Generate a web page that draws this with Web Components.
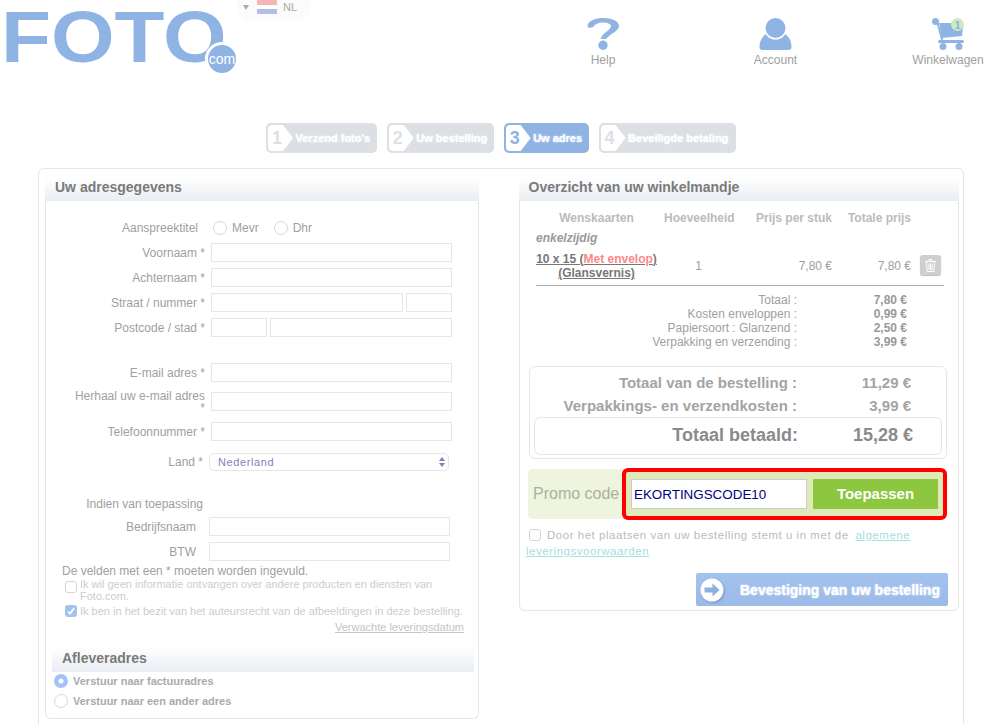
<!DOCTYPE html>
<html lang="nl">
<head>
<meta charset="utf-8">
<title>Foto.com</title>
<style>
  html, body { margin: 0; height: 724px; overflow: hidden; background: #fff; }
  body { font: 12px "Liberation Sans", Arial, sans-serif; color: #a0a0a0; }
</style>
</head>
<body>
<site-header></site-header>
<step-bar>
  <step-item n="1">Verzend foto's</step-item>
  <step-item n="2">Uw bestelling</step-item>
  <step-item n="3" active>Uw adres</step-item>
  <step-item n="4" style="padding-right:7.500px">Beveiligde betaling</step-item>
</step-bar>
<checkout-frame>
  <titled-panel heading="Uw adresgegevens" style="width:434px">
    <address-form></address-form>
  </titled-panel>
  <titled-panel heading="Overzicht van uw winkelmandje" style="width:440px;--pad:9.500px">
    <basket-summary></basket-summary>
    <order-totals></order-totals>
    <promo-bar></promo-bar>
    <order-confirm></order-confirm>
  </titled-panel>
</checkout-frame>

<script>
class SiteHeader extends HTMLElement {
  connectedCallback() {
    this.attachShadow({ mode: 'open' });
    this.shadowRoot.innerHTML = `
      <style>
        :host { display: flex; height: 123px; align-items: flex-start; }
        .logo { position: relative; width: 237px; height: 80px; flex: none; }
        .foto {
          display: inline-block;
          font: bold 73px/73px "Liberation Sans", Arial, sans-serif;
          color: #8fb4e3;
          margin: 0 0 0 1px;
          transform: scaleX(1.12);
          transform-origin: left;
        }
        .com {
          position: absolute; left: 205px; top: 42px;
          width: 28px; height: 28px; border: 3px solid #fff; border-radius: 50%;
          background: #8fb4e3; color: #fff;
          font-size: 14px; line-height: 29px; text-align: center;
        }
        .lang {
          width: 73px; height: 20px; flex: none; box-sizing: border-box;
          background: #fafbfa; border-radius: 0 0 12px 12px;
          display: flex; padding-left: 6px; color: #aaa; font-size: 11px; line-height: 14px;
        }
        .arrow { width: 0; height: 0; margin-top: 5px; border: 3.500px solid transparent; border-top: 5px solid #aaa; border-bottom: 0; }
        .flag { width: 20px; height: 14px; margin: 0 6px 0 8px; background: linear-gradient(#f6b6b6 0 5px, #fff 5px 9px, #b0bfe2 9px); }
        nav { margin: 0 -1px 0 auto; width: 425px; display: flex; justify-content: space-between; padding-top: 18px; }
      </style>
      <div class="logo"><span class="foto">FOTO</span><span class="com">com</span></div>
      <div class="lang"><span class="arrow"></span><span class="flag"></span>NL</div>
      <nav>
        <nav-link label="Help">
          <svg width="33" height="33" viewBox="0 0 33 33" fill="#8fb4e3">
            <path d="M.5 7C2 2.500 9 0 16 0c9 0 16 3 16 8 0 5-8 7-13 13h-5.500c1.500-6 10.500-9 10.500-12.500 0-3-4-4-8.500-4-4.500 0-7 1.500-9.500 4.500C3.500 10.500 0 10 .5 7z"/>
            <circle cx="16" cy="27.300" r="4.700"/>
          </svg>
        </nav-link>
        <nav-link label="Account">
          <svg width="33" height="33" viewBox="0 0 33 33">
            <path fill="#8fb4e3" d="M.5 29c0-8 5-13 10-15h12c5 2 10 7 10 15q0 3-3 3h-16H3.500q-3 0-3-3z"/>
            <circle cx="16.500" cy="10" r="11.500" fill="#fff"/>
            <circle cx="16.500" cy="10" r="10" fill="#8fb4e3"/>
          </svg>
        </nav-link>
        <nav-link label="Winkelwagen">
          <svg width="33" height="33" viewBox="0 0 33 33">
            <circle cx="3.500" cy="3.500" r="3.500" fill="#8fb4e3"/>
            <path d="M3.500 3.500l1.800.8 5.200 19" fill="none" stroke="#8fb4e3" stroke-width="2"/>
            <path fill="#8fb4e3" d="M7 5h24.500l-1.500 13-20 2z"/>
            <rect x="6" y="22" width="26" height="3" rx="1.500" fill="#8fb4e3"/>
            <circle cx="11" cy="28.500" r="3.500" fill="#8fb4e3"/>
            <circle cx="27" cy="28.500" r="3.500" fill="#8fb4e3"/>
            <circle cx="25.500" cy="6.500" r="6.500" fill="#cfe8c6"/>
            <text x="25.500" y="10.500" text-anchor="middle" font-family="Liberation Sans" font-weight="bold" font-size="11" fill="#8fb4d8">1</text>
          </svg>
        </nav-link>
      </nav>`;
  }
}

class NavLink extends HTMLElement {
  connectedCallback() {
    this.attachShadow({ mode: 'open' });
    this.shadowRoot.innerHTML = `
      <style>
        :host { display: flex; flex-direction: column; align-items: center; width: 80px; }
        ::slotted(svg) { display: block; }
        span { color: #a0a0a0; font-size: 12px; line-height: 16px; margin-top: 1px; }
      </style>
      <slot></slot><span>${this.getAttribute('label')}</span>`;
  }
}

class StepBar extends HTMLElement {
  connectedCallback() {
    this.attachShadow({ mode: 'open' });
    this.shadowRoot.innerHTML = `
      <style>:host { display: flex; gap: 10px; padding-left: 266px; height: 30px; }</style>
      <slot></slot>`;
  }
}

class StepItem extends HTMLElement {
  connectedCallback() {
    const colour = this.hasAttribute('active') ? '#8fb4e3' : '#dcdfe3';
    this.attachShadow({ mode: 'open' });
    this.shadowRoot.innerHTML = `
      <style>
        :host {
          display: flex; align-items: center; height: 30px; box-sizing: border-box;
          background: ${colour}; border-radius: 5px; padding-right: 6.500px;
          color: #fff; font: bold 11px "Liberation Sans", Arial, sans-serif;
          text-shadow: 0 0 2px #fff;
        }
        .num {
          width: 25px; height: 26px; margin: 0 2.500px 0 2px; border-radius: 4px 0 0 4px;
          background: #fff; color: ${colour}; text-shadow: none;
          clip-path: polygon(0 0, 60% 0, 100% 50%, 60% 100%, 0 100%);
          font-size: 18px; line-height: 27px; text-indent: 4px;
        }
      </style>
      <span class="num">${this.getAttribute('n')}</span><slot></slot>`;
  }
}

class CheckoutFrame extends HTMLElement {
  connectedCallback() {
    this.attachShadow({ mode: 'open' });
    this.shadowRoot.innerHTML = `
      <style>
        :host {
          display: flex; align-items: flex-start; gap: 40px;
          box-sizing: border-box; width: 926px; height: 556px;
          margin: 15px 0 0 38px; padding: 9px 0 0 6px;
          border: 1px solid #e6e6e6; border-bottom: 0; border-radius: 6px 6px 0 0;
        }
      </style>
      <slot></slot>`;
  }
}

class TitledPanel extends HTMLElement {
  connectedCallback() {
    this.attachShadow({ mode: 'open' });
    this.shadowRoot.innerHTML = `
      <style>
        :host {
          display: block; box-sizing: border-box;
          border: 1px solid #e6e6e6; border-top: 0; border-radius: 0 0 6px 6px;
        }
        h2 {
          margin: 0 -1px; height: 23px; padding-left: var(--pad, 10px);
          font: bold 14px/19px "Liberation Sans", Arial, sans-serif; color: #7a7a7a;
          background: linear-gradient(#fff, #e9edf2);
        }
      </style>
      <h2>${this.getAttribute('heading')}</h2><slot></slot>`;
  }
}

class FormRow extends HTMLElement {
  connectedCallback() {
    this.attachShadow({ mode: 'open' });
    this.shadowRoot.innerHTML = `
      <style>
        :host { display: flex; align-items: center; gap: 6px; padding-left: 24px; height: 19px; width: 382px; }
        label { width: 135px; flex: none; box-sizing: border-box; padding-right: var(--label-end, 0); text-align: right; line-height: 12px; color: #a0a0a0; }
        .ctl { display: flex; gap: 3px; flex: 1; }
      </style>
      <label>${this.getAttribute('label')}</label>
      <div class="ctl"><slot></slot></div>`;
  }
}

class TextBox extends HTMLElement {
  connectedCallback() {
    this.attachShadow({ mode: 'open' });
    this.shadowRoot.innerHTML = `
      <style>
        :host { display: block; flex: 1; box-sizing: border-box; height: 19px; border: 1px solid #e6e6e6; background: #fff; }
      </style>`;
  }
}

class RadioDot extends HTMLElement {
  connectedCallback() {
    this.attachShadow({ mode: 'open' });
    this.shadowRoot.innerHTML = `
      <style>
        :host {
          display: inline-block; box-sizing: border-box; width: 14px; height: 14px; border-radius: 50%;
          border: 1px solid #d8d8d8; background: #fff; flex: none;
        }
        :host([on]) { border: 0; background: radial-gradient(circle, #fff 0 2px, #a3c2fa 3px); }
      </style>`;
  }
}

class CheckBox extends HTMLElement {
  connectedCallback() {
    this.attachShadow({ mode: 'open' });
    this.shadowRoot.innerHTML = `
      <style>
        :host {
          display: inline-flex; box-sizing: border-box; width: 12px; height: 12px; border-radius: 3px;
          border: 1px solid #d4d4d4; background: #fff; flex: none;
        }
        :host([on]) { border: 0; background: #a3c2ee; }
        svg { display: none; }
        :host([on]) svg { display: block; }
      </style>
      <svg width="12" height="12" viewBox="0 0 12 12"><path d="M3 6.500l2 2.200 4-5.400" fill="none" stroke="#fff" stroke-width="1.800"/></svg>`;
  }
}

class AddressForm extends HTMLElement {
  connectedCallback() {
    this.attachShadow({ mode: 'open' });
    this.shadowRoot.innerHTML = `
      <style>
        :host { display: block; padding-top: 20px; height: 517px; box-sizing: border-box; }
        .title { display: flex; align-items: center; height: 14px; margin-bottom: 8px; color: #a0a0a0; }
        .title span:first-child { width: 152px; text-align: right; margin-right: 15px; }
        .title radio-dot { margin-right: 5px; }
        .title .opt { margin-right: 15px; }
        form-row { margin-bottom: 6px; }
        .land {
          flex: 1; box-sizing: border-box; height: 18px; margin-right: 1px;
          border: 1px solid #e6e6e6; border-radius: 5px; padding-left: 8px;
          display: flex; align-items: center; justify-content: space-between;
          color: #7f7fb8; font-size: 11px; letter-spacing: .6px;
        }
        .land svg { margin-right: 3px; }
        .apply { margin: 26px 0 6px; width: 157px; text-align: right; line-height: 14px; }
        .shift { margin-left: -2px; }
        .end { --label-end: 7px; }
        .note { margin: 3px 0 0 16px; line-height: 14px; }
        .check { display: flex; margin-left: 19px; gap: 3px; font-size: 11px; line-height: 12px; color: #cdcdcd; width: 400px; }
        .check check-box { margin-top: 3px; }
        .check.on { margin-top: 3px; }
        .check.on check-box { margin-top: 0; }
        .date { margin: 4px 14px 0 0; text-align: right; font-size: 11px; line-height: 13px; color: #c4c4c4; text-decoration: underline; }
        h3 {
          margin: 13px 4px 0 6px; height: 25px; padding-left: 10px;
          font: bold 14px/23px "Liberation Sans", Arial, sans-serif; color: #7a7a7a;
          background: linear-gradient(#fff, #e9edf2);
        }
        .ship { display: flex; align-items: center; gap: 5px; margin: 2px 0 6px 8px; font: bold 11px/14px "Liberation Sans", Arial, sans-serif; color: #aaa; }
      </style>
      <div class="title">
        <span>Aanspreektitel</span>
        <radio-dot></radio-dot><span class="opt">Mevr</span>
        <radio-dot></radio-dot><span>Dhr</span>
      </div>
      <form-row label="Voornaam *"><text-box></text-box></form-row>
      <form-row label="Achternaam *"><text-box></text-box></form-row>
      <form-row label="Straat / nummer *"><text-box style="flex:none;width:192px"></text-box><text-box></text-box></form-row>
      <form-row label="Postcode / stad *" style="margin-bottom:26px"><text-box style="flex:none;width:56px"></text-box><text-box></text-box></form-row>
      <form-row label="E-mail adres *" style="margin-bottom:10px"><text-box></text-box></form-row>
      <form-row label="Herhaal uw e-mail adres *" style="margin-bottom:11px"><text-box></text-box></form-row>
      <form-row label="Telefoonnummer *" style="margin-bottom:11px"><text-box></text-box></form-row>
      <form-row class="shift" label="Land *">
        <div class="land">Nederland
          <svg width="6" height="10" viewBox="0 0 6 10" fill="#7f7fb8"><path d="M3 0l3 4H0zM3 10l3-4H0z"/></svg>
        </div>
      </form-row>
      <div class="apply">Indien van toepassing</div>
      <form-row class="shift end" label="Bedrijfsnaam"><text-box></text-box></form-row>
      <form-row class="shift end" label="BTW" style="margin-bottom:0"><text-box></text-box></form-row>
      <div class="note">De velden met een * moeten worden ingevuld.</div>
      <div class="check"><check-box></check-box><span>Ik wil geen informatie ontvangen over andere producten en diensten van Foto.com.</span></div>
      <div class="check on"><check-box on></check-box><span>Ik ben in het bezit van het auteursrecht van de afbeeldingen in deze bestelling.</span></div>
      <div class="date">Verwachte leveringsdatum</div>
      <h3>Afleveradres</h3>
      <div class="ship"><radio-dot on></radio-dot>Verstuur naar factuuradres</div>
      <div class="ship"><radio-dot></radio-dot>Verstuur naar een ander adres</div>`;
  }
}

class BasketSummary extends HTMLElement {
  connectedCallback() {
    this.attachShadow({ mode: 'open' });
    this.shadowRoot.innerHTML = `
      <style>
        :host { display: block; padding: 10px 14px 0 9px; color: #a0a0a0; }
        .row { display: grid; grid-template-columns: 135px 69px 99px 79px 33px; }
        .head { font-weight: bold; color: #bbb; line-height: 14px; }
        .head span { text-align: right; }
        .head span:nth-child(-n+2), .qty { text-align: center; }
        em { display: block; margin: 6px 0 0 7px; font-weight: bold; color: #999; line-height: 14px; }
        .item { margin-top: 7px; align-items: center; }
        .name { text-align: center; font-weight: bold; color: #777; text-decoration: underline; line-height: 14px; white-space: nowrap; }
        .name b { color: #f98a8a; }
        .price { text-align: right; }
        .bin { justify-self: end; margin: -2px 3px 0 0; width: 21px; height: 20px; border-radius: 3px; background: #cfcfcf; box-shadow: 0 1px 1px #bbb; display: flex; align-items: center; justify-content: center; }
        hr { border: 0; border-top: 1px solid #b0b0b0; margin: 5px 0 0 7px; }
        .sum { display: grid; grid-template-columns: 268px 110px; margin-top: 7px; line-height: 14px; }
        .sum span { text-align: right; }
        .sum b { text-align: right; color: #999; }
      </style>
      <div class="row head"><span>Wenskaarten</span><span>Hoeveelheid</span><span>Prijs per stuk</span><span>Totale prijs</span></div>
      <em>enkelzijdig</em>
      <div class="row item">
        <div class="name">10 x 15 (<b>Met envelop</b>)<br>(Glansvernis)</div>
        <div class="qty">1</div>
        <div class="price">7,80 €</div>
        <div class="price">7,80 €</div>
        <div class="bin">
          <svg width="11" height="13" viewBox="0 0 11 13" fill="none" stroke="#fff"><path d="M0 2.500h11M4 2.500V.5h3v2M1.500 2.500l.7 10h6.600l.7-10M4 4.500v6.500M5.500 4.500v6.500M7 4.500v6.500"/></svg>
        </div>
      </div>
      <hr>
      <div class="sum">
        <span>Totaal :</span><b>7,80 €</b>
        <span>Kosten enveloppen :</span><b>0,99 €</b>
        <span>Papiersoort : Glanzend :</span><b>2,50 €</b>
        <span>Verpakking en verzending :</span><b>3,99 €</b>
      </div>`;
  }
}

class OrderTotals extends HTMLElement {
  connectedCallback() {
    this.attachShadow({ mode: 'open' });
    this.shadowRoot.innerHTML = `
      <style>
        :host {
          display: block; box-sizing: border-box; width: 418px; height: 93px; margin: 17px 0 0 9px;
          padding: 5px 4px 0; border: 1px solid #e6e6e6; border-radius: 6px;
          font: bold 15px/22.500px "Liberation Sans", Arial, sans-serif; color: #a4a4a4;
        }
        .line { display: grid; grid-template-columns: 263px 114px; }
        .line span:first-child, .line span:last-child { text-align: right; }
        .grand {
          height: 38px; box-sizing: border-box; border: 1px solid #e6e6e6; border-radius: 6px;
          display: grid; grid-template-columns: 263px 115px; font-size: 18px; line-height: 35px; color: #8a8a8a;
        }
        .grand span { text-align: right; }
      </style>
      <div class="line"><span>Totaal van de bestelling :</span><span>11,29 €</span></div>
      <div class="line"><span>Verpakkings- en verzendkosten :</span><span>3,99 €</span></div>
      <div class="grand"><span>Totaal betaald:</span><span>15,28 €</span></div>`;
  }
}

class PromoBar extends HTMLElement {
  connectedCallback() {
    this.attachShadow({ mode: 'open' });
    this.shadowRoot.innerHTML = `
      <style>
        :host {
          display: flex; align-items: center; box-sizing: border-box; width: 419px; height: 50px; margin: 10px 0 0 8px;
          background: #eef4de; border-radius: 5px; padding-left: 5px;
        }
        label { width: 89px; flex: none; font-size: 16px; color: #aab1a0; }
        .hi {
          display: flex; gap: 6px; box-sizing: border-box; width: 325px; height: 52px;
          padding: 7px 5px; border: 4px solid #f00; border-radius: 6px; background: #deebb9;
        }
        .code {
          width: 176px; box-sizing: border-box; height: 30px; padding-left: 2px; background: #fff; border: 1px solid #ccc;
          font-size: 13.400px; line-height: 29px; color: #000080;
        }
        .go {
          width: 125px; height: 30px; background: #8dc63f; color: #fff; text-align: center;
          font: bold 15px/30px "Liberation Sans", Arial, sans-serif;
        }
      </style>
      <label>Promo code</label>
      <div class="hi"><div class="code">EKORTINGSCODE10</div><div class="go">Toepassen</div></div>`;
  }
}

class OrderConfirm extends HTMLElement {
  connectedCallback() {
    this.attachShadow({ mode: 'open' });
    this.shadowRoot.innerHTML = `
      <style>
        :host { display: block; height: 91px; box-sizing: border-box; padding: 8px 10px 0 6px; }
        p { margin: 0; width: 400px; font-size: 11.500px; line-height: 16px; letter-spacing: .53px; color: #bbb; }
        check-box { vertical-align: -2px; margin: 0 6px 0 3px; }
        a { color: #a2e0e0; text-decoration: underline; margin-left: 3px; }
        a.next { margin-left: 0; }
        .btn {
          display: flex; align-items: center; box-sizing: border-box; width: 252px; height: 33px; margin: 14px 0 0 170px;
          background: linear-gradient(#a3c2ee, #9bbae8); border-radius: 2px; padding-left: 4px;
          color: #fff; font: bold 14px "Liberation Sans", Arial, sans-serif; text-shadow: 0 0 2px #fff;
        }
        .btn svg { margin-right: 16px; filter: drop-shadow(1px 1px 1px rgba(60, 90, 140, .4)); }
      </style>
      <p><check-box></check-box>Door het plaatsen van uw bestelling stemt u in met de <a>algemene</a> <a class="next">leveringsvoorwaarden</a></p>
      <div class="btn">
        <svg width="24" height="24" viewBox="0 0 24 24"><circle cx="12" cy="12" r="11.500" fill="#fff"/><path fill="#8fb0de" d="M4.500 9.500h8V5.500l7 6.500-7 6.500v-4h-8z"/></svg>
        Bevestiging van uw bestelling
      </div>`;
  }
}

customElements.define('site-header', SiteHeader);
customElements.define('nav-link', NavLink);
customElements.define('step-bar', StepBar);
customElements.define('step-item', StepItem);
customElements.define('checkout-frame', CheckoutFrame);
customElements.define('titled-panel', TitledPanel);
customElements.define('form-row', FormRow);
customElements.define('text-box', TextBox);
customElements.define('radio-dot', RadioDot);
customElements.define('check-box', CheckBox);
customElements.define('address-form', AddressForm);
customElements.define('basket-summary', BasketSummary);
customElements.define('order-totals', OrderTotals);
customElements.define('promo-bar', PromoBar);
customElements.define('order-confirm', OrderConfirm);
</script>
</body>
</html>
